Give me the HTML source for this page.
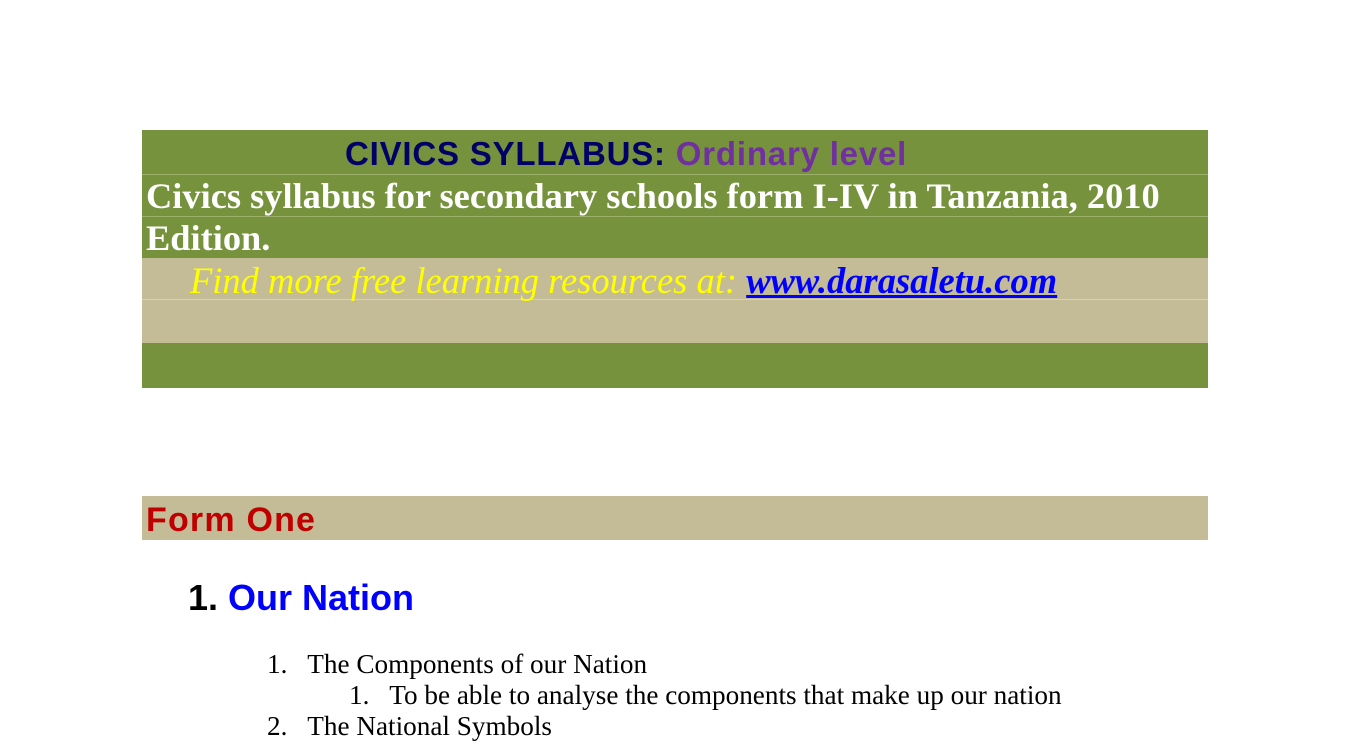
<!DOCTYPE html>
<html><head><style>
body{margin:0;width:1350px;height:747px;background:#fff;position:relative;overflow:hidden}
.a{position:absolute;white-space:nowrap}
.s{font-family:"Liberation Sans",sans-serif;font-weight:bold}
.t{font-family:"Liberation Serif",serif}
</style></head><body>
<div class="a" style="left:142px;top:130px;width:1066px;height:128px;background:#76923c"></div>
<div class="a" style="left:142px;top:258px;width:1066px;height:85px;background:#c4bc96"></div>
<div class="a" style="left:142px;top:343px;width:1066px;height:45px;background:#76923c"></div>
<div class="a" style="left:142px;top:174px;width:1066px;height:1px;background:#9bb06b"></div>
<div class="a" style="left:142px;top:216px;width:1066px;height:1px;background:#9bb06b"></div>
<div class="a" style="left:142px;top:299px;width:1066px;height:1px;background:#d6d0b5"></div>
<div class="a s" style="left:345px;top:135px;font-size:33px;letter-spacing:0.8px;color:#000066">CIVICS SYLLABUS: <span style="color:#7030a0">Ordinary level</span></div>
<div class="a t" style="left:146px;top:175px;font-size:36.4px;font-weight:bold;color:#fff">Civics syllabus for secondary schools form I-IV in Tanzania, 2010</div>
<div class="a t" style="left:146px;top:217px;font-size:36.4px;font-weight:bold;color:#fff">Edition.</div>
<div class="a t" style="left:190px;top:259px;font-size:36.5px;font-style:italic;color:#ffff00">Find more free learning resources at: <b style="color:#0000ff;text-decoration:underline">www.darasaletu.com</b></div>
<div class="a" style="left:142px;top:496px;width:1066px;height:44px;background:#c4bc96"></div>
<div class="a s" style="left:146px;top:501px;font-size:34px;letter-spacing:1.2px;color:#c00000">Form One</div>
<div class="a s" style="left:188px;top:577px;font-size:36px;color:#000">1. <span style="color:#0000ff">Our Nation</span></div>
<div class="a t" style="left:267px;top:649px;font-size:27.2px">1.&nbsp;&nbsp; The Components of our Nation</div>
<div class="a t" style="left:349px;top:680px;font-size:27.2px">1.&nbsp;&nbsp; To be able to analyse the components that make up our nation</div>
<div class="a t" style="left:267px;top:711px;font-size:27.2px">2.&nbsp;&nbsp; The National Symbols</div>
</body></html>
